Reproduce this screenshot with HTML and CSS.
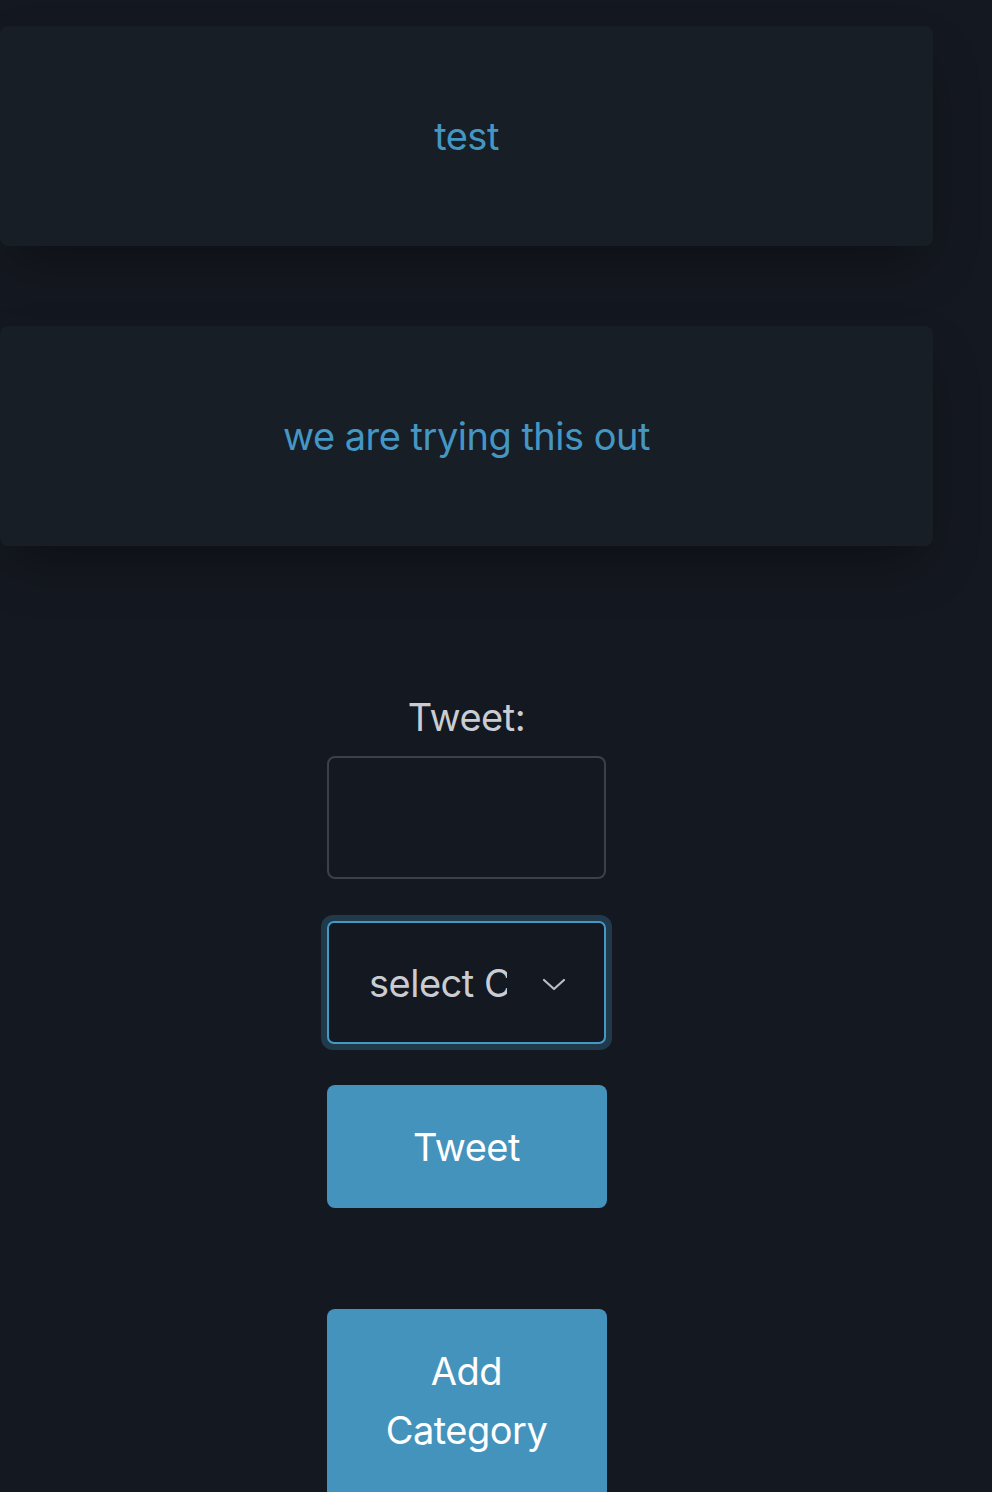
FILE: index.html
```html
<!DOCTYPE html>
<html lang="en">
<head>
<meta charset="utf-8">
<title>Tweets</title>
<link rel="stylesheet" href="styles.css">
</head>
<body>
<main class="page">
  <section class="feed">
    <article class="card"><p class="card-text">test</p></article>
    <article class="card"><p class="card-text">we are trying this out</p></article>
  </section>
  <form class="composer">
    <label class="label" for="tweet">Tweet:</label>
    <textarea class="textarea" id="tweet"></textarea>
    <div class="select-wrap">
      <div class="select">
        <span class="select-text">select Category</span>
        <svg class="chevron" width="24" height="16" viewBox="0 0 24 16" aria-hidden="true"><path d="M2 3 L12 12 L22 3" fill="none" stroke="#b7bec8" stroke-width="2.2" stroke-linecap="round" stroke-linejoin="round"/></svg>
      </div>
    </div>
    <button type="button" class="btn btn-tweet">Tweet</button>
    <button type="button" class="btn btn-add">Add<br>Category</button>
  </form>
</main>
</body>
</html>
```

FILE: styles.css
```css
* { box-sizing: border-box; }
html, body { margin: 0; padding: 0; }
body {
  background: #141820;
  font-family: Inter, "Noto Sans", sans-serif;
  color: #c9cdd3;
  overflow: hidden;
  height: 1492px;
  letter-spacing: -0.5px;
}
.page {
  width: 933px;
  display: flex;
  flex-direction: column;
  align-items: center;
}
.feed {
  width: 100%;
  padding-top: 26px;
  display: flex;
  flex-direction: column;
  gap: 80px;
}
.card {
  height: 220px;
  background: #171e26;
  border-radius: 8px;
  box-shadow: 0 25px 50px -12px rgba(0,0,0,0.35);
  display: flex;
  align-items: center;
  justify-content: center;
}
.card-text {
  margin: 0;
  color: #4497c4;
  font-size: 38px;
}
.composer {
  margin-top: 148px;
  display: flex;
  flex-direction: column;
  align-items: center;
  width: 280px;
}
.label {
  font-size: 38px;
  color: #c9cdd3;
  line-height: 46px;
  margin-bottom: 16px;
}
.textarea {
  display: block;
  width: 279px;
  height: 123px;
  background: #141820;
  border: 2px solid #39414b;
  border-radius: 8px;
  resize: none;
  margin: 0;
}
.select-wrap {
  margin-top: 36px;
  padding: 6px;
  border-radius: 12px;
  background: #213a4b;
  width: 291px;
}
.select {
  height: 123px;
  border: 2px solid #4597c4;
  border-radius: 7px;
  background: #141820;
  display: flex;
  align-items: center;
  padding-left: 40px;
  padding-right: 38px;
}
.select-text {
  font-size: 38px;
  color: #c9cdd3;
  width: 138px;
  overflow: hidden;
  white-space: nowrap;
  margin-right: auto;
}
.chevron { display: block; margin-top: 4px; flex: none; }
.btn {
  width: 280px;
  border: 0;
  border-radius: 8px;
  background: #4493bd;
  color: #ffffff;
  font-family: Inter, "Noto Sans", sans-serif;
  font-size: 38px;
  letter-spacing: -0.5px;
  padding: 0;
  cursor: pointer;
}
.btn-tweet {
  margin-top: 35px;
  height: 123px;
}
.btn-add {
  margin-top: 101px;
  height: 200px;
  line-height: 59px;
  padding-bottom: 17px;
}
```
